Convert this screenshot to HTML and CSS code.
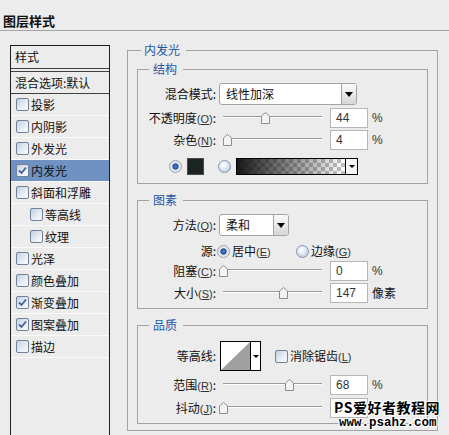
FILE: index.html
```html
<!DOCTYPE html>
<html>
<head>
<meta charset="utf-8">
<link rel="stylesheet" href="styles.css">
</head>
<body>
<div class="titlebar">图层样式</div>
<div class="main">
  <div class="list">
    <div class="list-head">样式</div>
    <div class="list-blend">混合选项:默认</div>
    <div class="item"><span class="cb"></span>投影</div>
    <div class="item"><span class="cb"></span>内阴影</div>
    <div class="item"><span class="cb"></span>外发光</div>
    <div class="item sel"><span class="cb"><svg viewBox="0 0 11 11" width="11" height="11"><path d="M2 5.5 L4.5 8 L9 2.5" fill="none" stroke="#3f6399" stroke-width="1.8"/></svg></span>内发光</div>
    <div class="item"><span class="cb"></span>斜面和浮雕</div>
    <div class="item sub"><span class="cb"></span>等高线</div>
    <div class="item sub"><span class="cb"></span>纹理</div>
    <div class="item"><span class="cb"></span>光泽</div>
    <div class="item"><span class="cb"></span>颜色叠加</div>
    <div class="item"><span class="cb"><svg viewBox="0 0 11 11" width="11" height="11"><path d="M2 5.5 L4.5 8 L9 2.5" fill="none" stroke="#3f6399" stroke-width="1.8"/></svg></span>渐变叠加</div>
    <div class="item"><span class="cb"><svg viewBox="0 0 11 11" width="11" height="11"><path d="M2 5.5 L4.5 8 L9 2.5" fill="none" stroke="#3f6399" stroke-width="1.8"/></svg></span>图案叠加</div>
    <div class="item"><span class="cb"></span>描边</div>
  </div>

  <div class="right">
    <fieldset class="outer">
      <legend>内发光</legend>

      <fieldset class="grp g1">
        <legend>结构</legend>
        <div class="row row-select">
          <span class="lbl">混合模式:</span>
          <div class="select w-blend"><span class="val">线性加深</span><span class="arrow"><span class="tri"></span></span></div>
        </div>
        <div class="row row-slider mt3">
          <span class="lbl">不透明度<span class="k">(<u>O</u>)</span>:</span>
          <div class="slider"><div class="track"></div><svg class="thumb" style="left:42px" viewBox="0 0 9 12"><path d="M0.5 4 L4.5 0.5 L8.5 4 V11.5 H0.5 Z" fill="#f3f3f3" stroke="#8d8d8d"/></svg></div>
          <div class="num">44</div><span class="unit">%</span>
        </div>
        <div class="row row-slider mt2">
          <span class="lbl">杂色<span class="k">(<u>N</u>)</span>:</span>
          <div class="slider"><div class="track"></div><svg class="thumb" style="left:4px" viewBox="0 0 9 12"><path d="M0.5 4 L4.5 0.5 L8.5 4 V11.5 H0.5 Z" fill="#f3f3f3" stroke="#8d8d8d"/></svg></div>
          <div class="num">4</div><span class="unit">%</span>
        </div>
        <div class="row row-color mt8">
          <span class="radio on"></span>
          <span class="swatch"></span>
          <span class="radio radio-gap"></span>
          <div class="gradient"><span class="fill"></span><span class="garrow"><span class="tri small"></span></span></div>
        </div>
      </fieldset>

      <fieldset class="grp g2">
        <legend>图素</legend>
        <div class="row row-select">
          <span class="lbl">方法<span class="k">(<u>Q</u>)</span>:</span>
          <div class="select w-method"><span class="val">柔和</span><span class="arrow"><span class="tri"></span></span></div>
        </div>
        <div class="row row-radio mt6">
          <span class="lbl">源:</span>
          <span class="radio on"></span>
          <span class="opt opt1">居中<span class="k">(<u>E</u>)</span></span>
          <span class="radio"></span>
          <span class="opt">边缘<span class="k">(<u>G</u>)</span></span>
        </div>
        <div class="row row-slider mt1">
          <span class="lbl">阻塞<span class="k">(<u>C</u>)</span>:</span>
          <div class="slider"><div class="track"></div><svg class="thumb" style="left:0px" viewBox="0 0 9 12"><path d="M0.5 4 L4.5 0.5 L8.5 4 V11.5 H0.5 Z" fill="#f3f3f3" stroke="#8d8d8d"/></svg></div>
          <div class="num">0</div><span class="unit">%</span>
        </div>
        <div class="row row-slider mt2">
          <span class="lbl">大小<span class="k">(<u>S</u>)</span>:</span>
          <div class="slider"><div class="track"></div><svg class="thumb" style="left:60px" viewBox="0 0 9 12"><path d="M0.5 4 L4.5 0.5 L8.5 4 V11.5 H0.5 Z" fill="#f3f3f3" stroke="#8d8d8d"/></svg></div>
          <div class="num">147</div><span class="unit cjk">像素</span>
        </div>
      </fieldset>

      <fieldset class="grp g3">
        <legend>品质</legend>
        <div class="row row-contour">
          <span class="lbl">等高线:</span>
          <div class="contour">
            <span class="curve"><svg viewBox="0 0 29 28" width="29" height="28"><polygon points="0,28 29,0 29,28" fill="#a0a0a0"/></svg></span>
            <span class="carrow"><span class="tri small"></span></span>
          </div>
          <span class="cb cb-gap"></span>
          <span class="opt">消除锯齿<span class="k">(<u>L</u>)</span></span>
        </div>
        <div class="row row-slider mt4">
          <span class="lbl">范围<span class="k">(<u>R</u>)</span>:</span>
          <div class="slider"><div class="track"></div><svg class="thumb" style="left:66px" viewBox="0 0 9 12"><path d="M0.5 4 L4.5 0.5 L8.5 4 V11.5 H0.5 Z" fill="#f3f3f3" stroke="#8d8d8d"/></svg></div>
          <div class="num">68</div><span class="unit">%</span>
        </div>
        <div class="row row-slider mt3">
          <span class="lbl">抖动<span class="k">(<u>J</u>)</span>:</span>
          <div class="slider"><div class="track"></div><svg class="thumb" style="left:0px" viewBox="0 0 9 12"><path d="M0.5 4 L4.5 0.5 L8.5 4 V11.5 H0.5 Z" fill="#f3f3f3" stroke="#8d8d8d"/></svg></div>
          <div class="num num-hidden">0</div>
        </div>
      </fieldset>
    </fieldset>
  </div>
</div>

<div class="watermark">
  <div class="wm1">PS爱好者教程网</div>
  <div class="wm2">www.psahz.com</div>
</div>
</body>
</html>
```

FILE: styles.css
```css
* { box-sizing: border-box; }

body {
  margin: 0;
  width: 449px;
  height: 435px;
  overflow: hidden;
  position: relative;
  background: #ececec;
  font-family: "Noto Sans CJK SC", "Liberation Sans", sans-serif;
  font-size: 12px;
  line-height: 16px;
  color: #111;
}

.titlebar {
  height: 31px;
  padding: 12px 0 0 3px;
  line-height: 17px;
  font-size: 13px;
  font-weight: bold;
  border-bottom: 1px solid #a4a4a4;
}

.main {
  display: flex;
  align-items: flex-start;
  padding-left: 10px;
}

/* left list */
.list {
  width: 100px;
  height: 390px;
  flex: none;
  margin-top: 14px;
  border: 1px solid #1e1e1e;
  border-bottom: none;
}

.list-head {
  height: 23px;
  display: flex;
  align-items: center;
  padding-left: 4px;
  border-bottom: 1px solid #404040;
  margin-bottom: 2px;
}

.list-blend {
  height: 23px;
  display: flex;
  align-items: center;
  padding-left: 4px;
  border-top: 1px solid #404040;
  border-bottom: 1px solid #404040;
}

.item {
  height: 22px;
  display: flex;
  align-items: center;
  gap: 2px;
  padding-left: 5px;
  border-bottom: 1px solid #fafafa;
}

.item.sub { padding-left: 19px; }

.item.sel { background: #7092c2; }

.cb {
  width: 13px;
  height: 13px;
  flex: none;
  display: flex;
  border: 1px solid #6f819b;
  border-radius: 2px;
  background: linear-gradient(135deg, #c3cfe0 0%, #e6ecf4 55%, #fbfcfd 100%);
}

/* right side */
.right {
  width: 311px;
  flex: none;
  margin: 11px 0 0 17px;
}

fieldset {
  margin: 0;
  min-width: 0;
  border: 1px solid #a2a2a2;
}

legend {
  color: #1f56a6;
  line-height: 16px;
}

.outer { padding: 3px 9px 6px 9px; }
.outer > legend { margin-left: 4px; padding: 0 6px 0 3px; }

.grp > legend { margin-left: 11px; padding: 0 6px 0 4px; }
.g1 { padding: 6px 0 8px 0; }
.g2 { margin-top: 8px; padding: 6px 0 5px 0; }
.g3 { margin-top: 8px; padding: 8px 0 5px 0; }

.row { display: flex; align-items: center; }
.row-select { height: 22px; }
.row-slider { height: 20px; }
.row-color { height: 17px; padding-left: 31px; }
.row-radio { height: 18px; }
.row-contour { height: 30px; }

.mt1 { margin-top: 1px; }
.mt2 { margin-top: 2px; }
.mt3 { margin-top: 3px; }
.mt4 { margin-top: 4px; }
.mt6 { margin-top: 6px; }
.mt8 { margin-top: 8px; }

.lbl {
  width: 78px;
  flex: none;
  margin-right: 3px;
  text-align: right;
  white-space: nowrap;
  color: #111;
}

.row-radio .lbl { margin-right: 1px; }

.k {
  font-family: "Liberation Sans", sans-serif;
  font-size: 11px;
  color: #333;
}

.k u { text-underline-offset: 1px; }

/* select */
.select {
  display: flex;
  height: 22px;
  flex: none;
  border: 1px solid #a3a3a3;
  border-radius: 3px;
  background: #fff;
}

.select .val { flex: 1; padding-left: 6px; line-height: 20px; }

.select .arrow {
  width: 15px;
  display: flex;
  align-items: center;
  justify-content: center;
  border-left: 1px solid #a3a3a3;
  border-radius: 0 2px 2px 0;
  background: linear-gradient(#fbfbfb, #d6d6d6);
}

.w-blend { width: 138px; }
.w-method { width: 70px; }

.tri {
  width: 0;
  height: 0;
  border-left: 4px solid transparent;
  border-right: 4px solid transparent;
  border-top: 5px solid #000;
}

.tri.small {
  border-left-width: 3px;
  border-right-width: 3px;
  border-top-width: 3px;
}

/* slider */
.slider {
  position: relative;
  width: 111px;
  height: 12px;
  flex: none;
  padding: 4px 8px 0 4px;
}

.track {
  height: 2px;
  border-top: 1px solid #9a9a9a;
  border-bottom: 1px solid #ffffff;
}

.thumb {
  position: absolute;
  top: 0;
  width: 9px;
  height: 12px;
}

.num {
  width: 38px;
  height: 20px;
  flex: none;
  padding-left: 5px;
  border: 1px solid #b6b6b6;
  background: #fff;
  font-family: "Liberation Sans", sans-serif;
  font-size: 12px;
  line-height: 18px;
  color: #333;
}

.unit {
  margin-left: 4px;
  font-family: "Liberation Sans", sans-serif;
  font-size: 12px;
  color: #333;
}

.unit.cjk { font-family: "Noto Sans CJK SC", sans-serif; color: #111; }

/* radios */
.radio {
  width: 13px;
  height: 13px;
  flex: none;
  border: 1px solid #8196b4;
  border-radius: 50%;
  background: radial-gradient(circle at 40% 35%, #ffffff 0, #e2eaf4 40%, #a9bedb 100%);
}

.radio.on {
  border-color: #9aa3ae;
  background: radial-gradient(circle at 50% 50%, #4f7fcf 0, #23509f 2.8px, #d9dfe7 3.4px, #f6f6f6 100%);
}

.radio-gap { margin-left: 14px; }

.opt { margin-left: 2px; white-space: nowrap; }
.opt1 { width: 64px; flex: none; }

.swatch {
  width: 17px;
  height: 17px;
  flex: none;
  margin-left: 5px;
  border: 1px solid #4a4a4a;
  background: #1b2422;
}

.gradient {
  width: 122px;
  height: 17px;
  flex: none;
  margin-left: 5px;
  display: flex;
  border: 1px solid #000;
}

.gradient .fill {
  flex: 1;
  background:
    linear-gradient(to right, rgba(24, 24, 24, 1), rgba(24, 24, 24, 0)),
    repeating-conic-gradient(#c2c2c2 0 25%, #ffffff 0 50%) 0 0 / 8px 8px;
}

.gradient .garrow {
  width: 12px;
  display: flex;
  justify-content: center;
  padding-top: 6px;
  border-left: 1px solid #000;
  background: #f4f4f4;
}

/* contour */
.contour {
  width: 41px;
  height: 30px;
  flex: none;
  margin-left: 1px;
  display: flex;
  border: 1px solid #000;
  background: #fff;
}

.curve { width: 29px; display: flex; }

.carrow {
  flex: 1;
  display: flex;
  align-items: center;
  justify-content: center;
  border-left: 1px solid #000;
}

.cb-gap { margin-left: 14px; }

/* watermark overlay */
.watermark {
  position: absolute;
  left: 334px;
  top: 398px;
  color: #000;
  font-weight: bold;
  text-shadow: 1px 0 #fff, -1px 0 #fff, 0 1px #fff, 0 -1px #fff,
               1px 1px #fff, -1px -1px #fff, 1px -1px #fff, -1px 1px #fff;
}

.wm1 {
  font-size: 14px;
  line-height: 18px;
  letter-spacing: 0.5px;
}

.wm2 {
  margin-left: 5px;
  font-family: "Liberation Mono", monospace;
  font-size: 12.5px;
  line-height: 14px;
}
```
